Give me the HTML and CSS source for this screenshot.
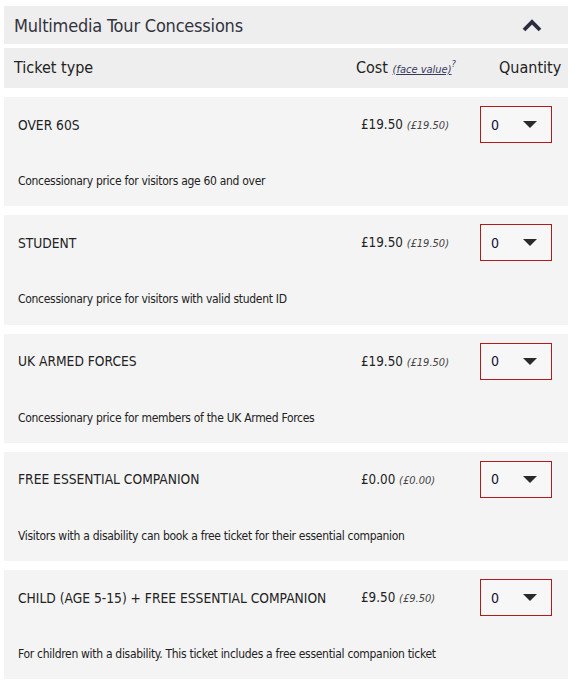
FILE: index.html
```html
<!DOCTYPE html>
<html lang="en">
<head>
<meta charset="utf-8">
<title>Multimedia Tour Concessions</title>
<link rel="stylesheet" href="styles.css">
</head>
<body>
<section class="panel">
  <header class="panel-head">
    <h2 class="panel-title">Multimedia Tour Concessions</h2>
    <svg class="chevron" width="20" height="14" viewBox="0 0 20 14" aria-hidden="true"><path d="M2 12 L10 4 L18 12" fill="none" stroke="#2c2c3e" stroke-width="3.8"/></svg>
  </header>
  <div class="cols">
    <span class="col-type">Ticket type</span>
    <span class="col-cost">Cost <a class="face" href="#">(face value)</a><sup class="q">?</sup></span>
    <span class="col-qty">Quantity</span>
  </div>

  <div class="ticket">
    <div class="name">OVER 60S</div>
    <div class="price">£19.50 <em>(£19.50)</em></div>
    <div class="qty"><span>0</span><i class="arrow"></i></div>
    <div class="desc">Concessionary price for visitors age 60 and over</div>
  </div>
  <div class="ticket">
    <div class="name">STUDENT</div>
    <div class="price">£19.50 <em>(£19.50)</em></div>
    <div class="qty"><span>0</span><i class="arrow"></i></div>
    <div class="desc">Concessionary price for visitors with valid student ID</div>
  </div>
  <div class="ticket">
    <div class="name">UK ARMED FORCES</div>
    <div class="price">£19.50 <em>(£19.50)</em></div>
    <div class="qty"><span>0</span><i class="arrow"></i></div>
    <div class="desc">Concessionary price for members of the UK Armed Forces</div>
  </div>
  <div class="ticket">
    <div class="name">FREE ESSENTIAL COMPANION</div>
    <div class="price">£0.00 <em>(£0.00)</em></div>
    <div class="qty"><span>0</span><i class="arrow"></i></div>
    <div class="desc">Visitors with a disability can book a free ticket for their essential companion</div>
  </div>
  <div class="ticket">
    <div class="name">CHILD (AGE 5-15) + FREE ESSENTIAL COMPANION</div>
    <div class="price">£9.50 <em>(£9.50)</em></div>
    <div class="qty"><span>0</span><i class="arrow"></i></div>
    <div class="desc">For children with a disability. This ticket includes a free essential companion ticket</div>
  </div>
</section>
</body>
</html>
```

FILE: styles.css
```css
html, body {
  margin: 0;
  padding: 0;
  background: #ffffff;
}
body {
  font-family: Tahoma, "DejaVu Sans Condensed", "DejaVu Sans", sans-serif;
  color: #222222;
}
.panel {
  margin: 6px 10px 0 4px;
}
.panel-head {
  height: 38px;
  background: #eeeeee;
  display: flex;
  align-items: center;
  justify-content: space-between;
  padding: 0 26px 0 10px;
}
.panel-title {
  margin: 0;
  font-weight: normal;
  font-size: 18px;
  letter-spacing: -0.2px;
  color: #333340;
}
.chevron {
  display: block;
}
.cols {
  margin-top: 4px;
  height: 40px;
  background: #eeeeee;
  display: grid;
  grid-template-columns: 1fr 143px 60px;
  align-items: center;
  padding: 0 9px 2px 10px;
  box-sizing: border-box;
  font-size: 16px;
  color: #222222;
}
.col-cost .face {
  font-size: 11px;
  font-style: italic;
  color: #3a3a60;
}
.col-cost .q {
  font-size: 9px;
  font-style: italic;
  color: #3a3a60;
}
.col-qty {
  text-align: right;
}
.ticket {
  margin-top: 9px;
  height: 109.25px;
  box-sizing: border-box;
  background: #f4f4f4;
  display: grid;
  grid-template-columns: 1fr 119px 72px;
  grid-template-rows: 37px auto;
  align-content: start;
  padding: 9px 16px 0 14px;
  color: #222222;
}
.name {
  align-self: center;
  font-size: 13.7px;
}
.price {
  align-self: center;
  font-size: 13.3px;
}
.price em {
  font-size: 11px;
  color: #444444;
}
.qty {
  box-sizing: border-box;
  border: 1px solid #b01c1c;
  background: #f7f7f7;
  display: flex;
  align-items: center;
  justify-content: space-between;
  padding: 0 14px 0 10px;
  font-size: 14px;
  color: #111133;
}
.arrow {
  width: 0;
  height: 0;
  border-left: 7.5px solid transparent;
  border-right: 7.5px solid transparent;
  border-top: 7px solid #2a2a2a;
}
.desc {
  grid-column: 1 / -1;
  margin-top: 30px;
  font-size: 12px;
  line-height: 16px;
  letter-spacing: -0.3px;
}
```
